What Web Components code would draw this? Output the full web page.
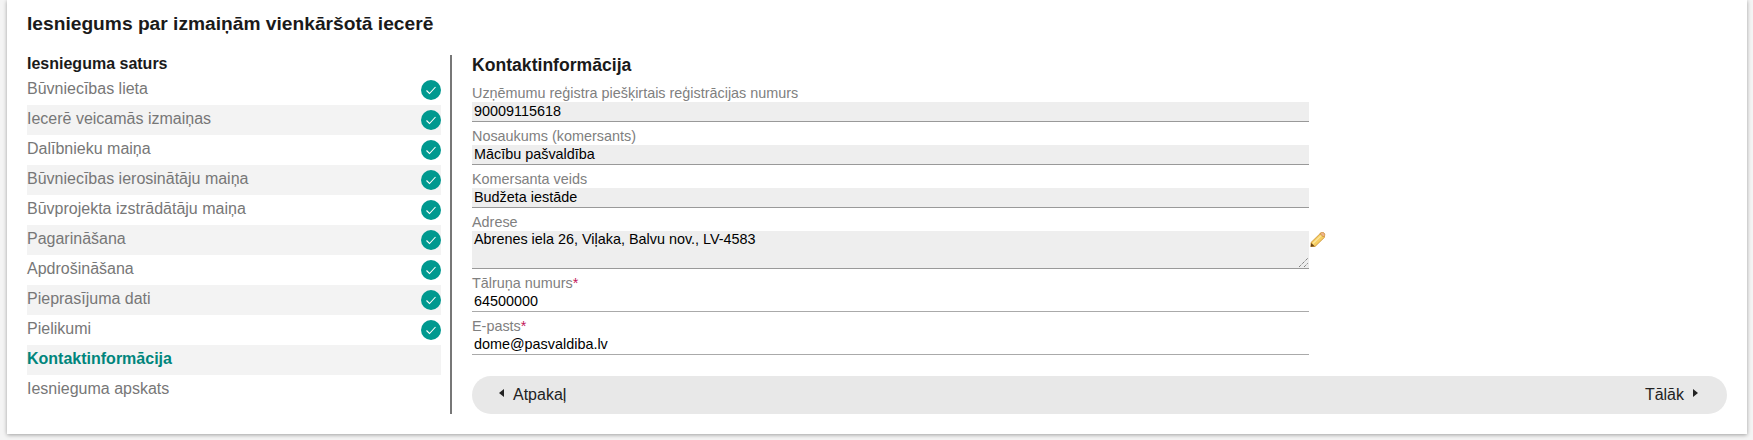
<!DOCTYPE html>
<html lang="lv">
<head>
  <meta charset="UTF-8">
  <title>Iesniegums</title>
  <style>
    html, body { margin: 0; height: 440px; overflow: hidden; background: #f4f4f4; }
    body { font-family: "Liberation Sans", Arial, sans-serif; color: #1a1a1a; }
  </style>
</head>
<body>
<application-card heading="Iesniegums par izmaiņām vienkāršotā iecerē">
  <side-nav slot="side" heading="Iesnieguma saturs">
    <nav-item done>Būvniecības lieta</nav-item>
    <nav-item done>Iecerē veicamās izmaiņas</nav-item>
    <nav-item done>Dalībnieku maiņa</nav-item>
    <nav-item done>Būvniecības ierosinātāju maiņa</nav-item>
    <nav-item done>Būvprojekta izstrādātāju maiņa</nav-item>
    <nav-item done>Pagarināšana</nav-item>
    <nav-item done>Apdrošināšana</nav-item>
    <nav-item done>Pieprasījuma dati</nav-item>
    <nav-item done>Pielikumi</nav-item>
    <nav-item active>Kontaktinformācija</nav-item>
    <nav-item>Iesnieguma apskats</nav-item>
  </side-nav>
  <contact-form heading="Kontaktinformācija">
    <form-field label="Uzņēmumu reģistra piešķirtais reģistrācijas numurs" readonly>90009115618</form-field>
    <form-field label="Nosaukums (komersants)" readonly>Mācību pašvaldība</form-field>
    <form-field label="Komersanta veids" readonly>Budžeta iestāde</form-field>
    <form-field label="Adrese" readonly multiline editable>Abrenes iela 26, Viļaka, Balvu nov., LV-4583</form-field>
    <form-field label="Tālruņa numurs" required>64500000</form-field>
    <form-field label="E-pasts" required>dome@pasvaldiba.lv</form-field>
    <step-bar slot="footer"></step-bar>
  </contact-form>
</application-card>

<script>
class ApplicationCard extends HTMLElement {
  constructor() {
    super();
    this.attachShadow({mode: 'open'}).innerHTML = `
      <style>
        :host {
          display: block;
          box-sizing: border-box;
          height: 434px;
          margin: 0 6px 0 7px;
          padding: 13px 20px 0;
          background: #fff;
          box-shadow: 0 1px 4px rgba(0, 0, 0, .35);
        }
        h1 { margin: 0; font-size: 19.2px; line-height: 22px; font-weight: bold; color: #1a1a1a; }
        .cols { display: flex; margin-top: 20px; height: 359px; }
        .side { flex: 0 0 414px; }
        .rule { flex: 0 0 2px; margin-left: 9px; background: #777; }
        .main { flex: 1; margin-left: 20px; min-width: 0; }
      </style>
      <h1>${this.getAttribute('heading')}</h1>
      <div class="cols">
        <div class="side"><slot name="side"></slot></div>
        <div class="rule"></div>
        <div class="main"><slot></slot></div>
      </div>`;
  }
}
customElements.define('application-card', ApplicationCard);

class SideNav extends HTMLElement {
  constructor() {
    super();
    this.attachShadow({mode: 'open'}).innerHTML = `
      <style>
        :host { display: block; }
        h2 { margin: 0; height: 20px; font-size: 16px; line-height: 18px; font-weight: bold; color: #1a1a1a; }
        ::slotted(nav-item:nth-of-type(even)) { background: #f3f3f3; }
      </style>
      <h2>${this.getAttribute('heading')}</h2>
      <slot></slot>`;
  }
}
customElements.define('side-nav', SideNav);

class NavItem extends HTMLElement {
  constructor() {
    super();
    const check = this.hasAttribute('done') ? `
      <svg width="20" height="20" viewBox="0 0 20 20">
        <circle cx="10" cy="10" r="10" fill="#00998f"/>
        <path d="M5.5 10.5l3 3 6-6.5" fill="none" stroke="#fff" stroke-width="1.1"/>
      </svg>` : '';
    this.attachShadow({mode: 'open'}).innerHTML = `
      <style>
        :host {
          display: flex;
          justify-content: space-between;
          height: 30px;
          font-size: 16px;
          line-height: 28px;
          color: #777;
        }
        :host([active]) { font-weight: bold; color: #00857c; }
        svg { margin-top: 5px; }
      </style>
      <span><slot></slot></span>${check}`;
  }
}
customElements.define('nav-item', NavItem);

class ContactForm extends HTMLElement {
  constructor() {
    super();
    this.attachShadow({mode: 'open'}).innerHTML = `
      <style>
        :host { display: block; height: 100%; }
        h2 { margin: 0 0 9px; font-size: 17.6px; line-height: 21px; font-weight: bold; color: #1a1a1a; }
        .fields { width: 837px; }
        ::slotted(step-bar) { margin-top: 15px; }
      </style>
      <h2>${this.getAttribute('heading')}</h2>
      <div class="fields"><slot></slot></div>
      <slot name="footer"></slot>`;
  }
}
customElements.define('contact-form', ContactForm);

class FormField extends HTMLElement {
  constructor() {
    super();
    const star = this.hasAttribute('required') ? '<span class="req">*</span>' : '';
    const pencil = this.hasAttribute('editable') ? `
      <svg class="pencil" width="16" height="15" viewBox="0 0 16 15">
        <path d="M1 10.5L10.8 1l4 4L5 14.5 1 15z" fill="#f6cf63" stroke="#c98a2b" stroke-width=".8"/>
        <path d="M3 11.5l9-8.6" stroke="#fbe6a2" stroke-width="1.2"/>
        <path d="M10.8 1c1-.9 2.2-.9 3.2 0s1 2.6 0 3.4l-.6.6-3.4-3.4z" fill="#eeb48c" stroke="#c98a2b" stroke-width=".8"/>
        <path d="M0.6 14.8l.7-3.8 3.4 3.2z" fill="#6b4312"/>
      </svg>` : '';
    const grip = this.hasAttribute('multiline') ? `
      <svg class="grip" width="9" height="9" viewBox="0 0 9 9">
        <path d="M0 9L9 0M5 9l4-4" stroke="#555" stroke-width="1" stroke-dasharray="1 1" fill="none"/>
      </svg>` : '';
    this.attachShadow({mode: 'open'}).innerHTML = `
      <style>
        :host { display: block; height: 43px; }
        :host([multiline]) { height: 61px; }
        label { display: block; height: 17px; font-size: 14.4px; line-height: 17px; color: #808080; }
        .req { color: #c2185b; }
        .value {
          position: relative;
          box-sizing: border-box;
          height: 20px;
          padding: 1px 2px 0;
          font-size: 14.4px;
          line-height: 17px;
          color: #000;
          border-bottom: 1px solid #aaa;
        }
        :host([readonly]) .value { background: #eee; border-bottom: 1px solid #999; }
        :host([multiline]) .value { height: 38px; padding-top: 0; }
        .grip { position: absolute; right: 1px; bottom: 1px; }
        .pencil { position: absolute; left: 100%; top: 1px; margin-left: 1px; }
      </style>
      <label>${this.getAttribute('label')}${star}</label>
      <div class="value"><slot></slot>${grip}${pencil}</div>`;
  }
}
customElements.define('form-field', FormField);

class StepBar extends HTMLElement {
  constructor() {
    super();
    this.attachShadow({mode: 'open'}).innerHTML = `
      <style>
        :host {
          display: flex;
          justify-content: space-between;
          align-items: center;
          height: 38px;
          padding: 0 29px 0 27px;
          border-radius: 19px;
          background: #e8e8e8;
          font-size: 16px;
          color: #222;
        }
        span { display: flex; align-items: center; gap: 9px; line-height: 36px; margin-top: -1px; }
        span:first-child { gap: 10px; }
        i { width: 0; height: 0; border-style: solid; border-color: transparent; margin-top: -3px; }
        .l { border-width: 4px 5px 4px 0; border-right-color: #222; }
        .r { border-width: 4px 0 4px 5px; border-left-color: #222; }
      </style>
      <span><i class="l"></i>Atpakaļ</span>
      <span>Tālāk<i class="r"></i></span>`;
  }
}
customElements.define('step-bar', StepBar);
</script>
</body>
</html>
